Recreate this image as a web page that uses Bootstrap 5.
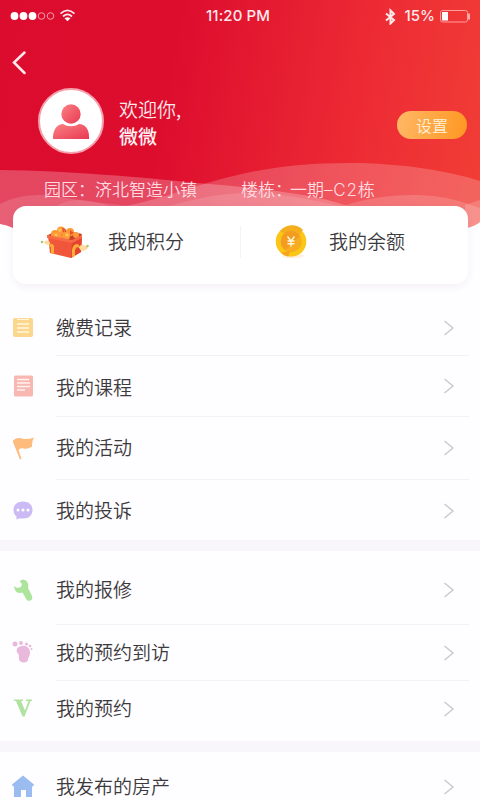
<!DOCTYPE html>
<html lang="zh-CN">
<head>
<meta charset="utf-8">
<meta name="viewport" content="width=device-width, initial-scale=1">
<title>我的</title>
<link href="https://cdn.jsdelivr.net/npm/bootstrap@5.3.0/dist/css/bootstrap.min.css" rel="stylesheet">
<style>
body{font-family:"Noto Sans CJK SC DemiLight","Noto Sans CJK SC",sans-serif;font-weight:350;color:#3c3a3d;background:#fefdff;height:800px;overflow:hidden;font-size:19px;line-height:28px}
svg{display:block;flex:none}
.hero{height:230px;background:linear-gradient(100deg,#dc0c2e 0%,#dd0d2e 35%,#ed2a34 72%,#f13e36 100%)}
.waves{left:0;top:155px}
.status{height:32px;padding:0 9px 0 10px;font:500 15px/32px Inter,sans-serif;color:#ffe9ec}
.clock{left:206px;top:0;letter-spacing:.1px}
.back{padding:19px 0 0 12px;height:56px}
.profile{padding:0 13px 0 38px;height:66px}
.avatar{width:66px;height:66px;background:#fff;border:2px solid #f4a0ad}
.hello{margin-left:15px;line-height:27px;color:#ffe8ea;padding-top:1px}
.hello b{font-family:"Noto Sans CJK SC",sans-serif;font-weight:500;color:#fff0f2}
.setting{width:70px;height:28px;margin-top:8px;background:linear-gradient(100deg,#ffb866,#ff9722);color:#fff1d8;font-size:16px;line-height:27px;padding:0;font-weight:350}
.place{padding:22px 0 0 44px;font-size:17px;line-height:26px;color:#ffdbe0}
.place .zone{width:197px}
.place .unit{margin-left:-2px}
.place .latin{font-family:Inter,sans-serif;font-weight:300;letter-spacing:.8px}
.wallet{margin:-24px 12px 0 13px;height:78px;border:0;border-radius:13px;box-shadow:0 3px 10px rgba(80,50,100,.06);background:#fff}
.wallet .half{height:71px}
.points{width:227px;padding-left:27px}
.points span{margin-left:18px}
.balance{padding-left:34px}
.balance span{margin-left:22px}
.half span,.item .label{position:relative;top:-1px}
.vline{width:1px;height:32px;background:#f6f3f7}
.item{padding:0 25px 0 12px}
.item .ico{width:22px;margin-right:22px}
.item .label{flex:1}
.rule{height:1px;margin:0 11px 0 56px;background:#f3f1f4}
.band{height:11px;background:#f8f6fa}
.h55{height:55px}.h60{height:60px}.h62{height:62px}
</style>
<script src="https://cdn.jsdelivr.net/npm/bootstrap@5.3.0/dist/js/bootstrap.bundle.min.js"></script>
</head>
<body>
<svg width="0" height="0" class="position-absolute"><defs>
<symbol id="chev" viewBox="0 0 12 18"><path d="M1.500 2 10 9l-8.500 7" fill="none" stroke="#cbc8cc" stroke-width="1.400"/></symbol>
<linearGradient id="person" x2="1" y2="1"><stop offset="0" stop-color="#fa8384"/><stop offset="1" stop-color="#e93852"/></linearGradient>
</defs></svg>
<header class="hero position-relative">
<svg class="waves position-absolute" width="480" height="75" viewBox="0 0 480 75">
<path d="M0 15C70 16 140 22 197 28 260 33 320 40 350 52V75H0Z" fill="#fff" fill-opacity=".24"/>
<path d="M120 52C190 40 230 8 350 8 400 8 450 16 480 26V75H120Z" fill="#fff" fill-opacity=".2"/>
<path d="M0 49Q25 36 60 42T130 51V75H0Z" fill="#fff" fill-opacity=".14"/>
<path d="M55 52Q75 38 112 52V75H55Z" fill="#fff" fill-opacity=".1"/>
<path d="M165 52C195 44 220 37 255 38S320 47 345 52V75H165Z" fill="#fff" fill-opacity=".12"/>
<path d="M340 52C380 38 430 36 465 48L480 53V75H340Z" fill="#fff" fill-opacity=".16"/>
<path d="M465 50 480 45V75H465Z" fill="#fff" fill-opacity=".16"/>
<path d="M0 69Q7 70 13 73H467Q475 71 480 67V75H0Z" fill="#fefdff"/>
</svg>
<div class="position-relative">
<div class="status d-flex justify-content-between align-items-center">
<svg width="66" height="18" viewBox="0 0 66 18"><g fill="#fff"><circle cx="4.500" cy="9" r="3.900"/><circle cx="13.500" cy="9" r="3.900"/><circle cx="22.500" cy="9" r="3.900"/></g><g fill="none" stroke="#ff9cab"><circle cx="31.500" cy="9" r="3.300"/><circle cx="40.500" cy="9" r="3.300"/></g><g fill="none" stroke="#ffe6ea" stroke-width="1.700"><path d="M50.500 6.700Q57.500 0 64.500 6.700M53 9.500Q57.500 5.400 62 9.500"/></g><path d="m54.500 11.300 3 3 3-3q-3-2.300-6 0Z" fill="#fff"/></svg>
<span class="clock position-absolute">11:20 PM</span>
<div class="d-flex align-items-center"><svg width="13" height="18" viewBox="0 0 13 18"><path d="m2 6.500 8 6.500-3.500 3.500v-13L10 7l-8 6.500" fill="none" stroke="#ffeaec" stroke-width="2"/></svg><span class="ms-1 me-1 ps-1">15%</span><svg width="32" height="14" viewBox="0 0 32 14"><rect x="1.500" y="1.500" width="27" height="11.500" rx="2" fill="none" stroke="#ff9c9c"/><path d="M3 3h6v8.500H3z" fill="#fff"/><path d="M30 4.500v6" stroke="#ffd1d1" stroke-width="1.500"/></svg></div>
</div>
<div class="back"><svg width="14" height="24" viewBox="0 0 14 24"><path d="M12.500 1.500 2 11.500l10.500 10.500" fill="none" stroke="#ffe7ec" stroke-width="2.500" stroke-linecap="round"/></svg></div>
<div class="profile d-flex align-items-center">
<div class="avatar rounded-circle d-flex align-items-center justify-content-center flex-shrink-0"><svg width="38" height="36" viewBox="0 0 38 36"><g fill="url(#person)"><circle cx="19" cy="11" r="9.700"/><path d="M1 36V33c1-8 5-12 10-12 5 3 11 3 16 0 6 0 10 5 10 12v3Z"/></g></svg></div>
<div class="hello flex-grow-1">欢迎你,<br><b>微微</b></div>
<button class="setting btn rounded-pill border-0">设置</button>
</div>
<div class="place d-flex"><span class="zone">园区：济北智造小镇</span><span>楼栋：<span class="unit">一期<span class="latin">–C2</span>栋</span></span></div>
</div>
</header>
<section class="wallet card position-relative">
<div class="d-flex align-items-center">
<div class="half points d-flex align-items-center">
<svg width="50" height="34" viewBox="0 0 50 34"><path d="m8 10 12-6 22 5-3 7-26 1Z" fill="#c9402b"/><g fill="#ff9a3a"><circle cx="15" cy="9" r="4"/><circle cx="21" cy="5.500" r="4"/><circle cx="30" cy="7" r="4"/><circle cx="26" cy="11" r="4"/><circle cx="18" cy="12" r="4"/><circle cx="36" cy="10" r="3"/></g><g fill="#ffc452"><circle cx="20" cy="5" r="1.800"/><circle cx="27" cy="10" r="1.800"/><circle cx="16" cy="10" r="1.500"/></g><path d="m22 3 4 1-3 4M30 5l4 3-4 2" fill="#e9532d"/><path d="m8 11 24 5 10-5-1 16-10 6-21-5Z" fill="#f0563a"/><path d="m32 16 10-5-1 16-10 6Z" fill="#e5432f"/><path d="m7 10 25 5 10-5v3l-10 5-25-5Z" fill="#f76a45"/><path d="M10 19q3-1 4 2v8l-3-1v-6l-2-1ZM32 25q1-6 5-6 2 0 3 4l-3-1-2 3v6l-3 1Z" fill="#ffae35"/><path d="M10 17q-4-3-6 0 2 4 6 2" fill="#ffd796"/><path d="M39 22q3-4 6-1 4-2 3 2-2 3-5 3t-4-4Z" fill="#ffdc9c"/><circle cx="2" cy="17" r="1.300" fill="#a5c96f"/><circle cx="47.500" cy="21" r="1.300" fill="#b2c97b"/></svg>
<span>我的积分</span></div>
<div class="vline"></div>
<div class="half balance d-flex align-items-center"><svg width="32" height="36" viewBox="0 0 32 36"><ellipse cx="18" cy="32" rx="11" ry="2.500" fill="#fff0e2"/><circle cx="16" cy="17.500" r="15.300" fill="#fac719"/><path d="M5 7a15.300 15.300 0 0 1 23-1L20 17Z" fill="#f5ae1e"/><path d="M6 29a15.300 15.300 0 0 0 7 3.500l3-6Z" fill="#f7a51b"/><circle cx="16" cy="17.500" r="10.500" fill="#f49c20"/><path d="M25 12a10.500 10.500 0 0 1-15 14Z" fill="#f8ad20"/><path d="m12.500 12.500 3.500 4.500 3.500-4.500M16 17v5.500m-3.500-5.500h7m-7 2.800h7" fill="none" stroke="#fff6d8" stroke-width="1.500"/></svg><span>我的余额</span></div>
</div>
</section>
<main class="pt-3">
<div class="item h55 d-flex align-items-center"><svg class="ico" width="22" height="22" viewBox="0 0 22 22"><path d="M3 1h16q2 0 2 2v15q0 2-2 2H3q-2 0-2-2V3q0-2 2-2Z" fill="#fbd68d"/><path d="M6 0v2.500h10V0" fill="none" stroke="#fff5dd" stroke-width="1.200"/><path d="M5 7h12M5 11h12M5 15h12" stroke="#fff7df" stroke-width="1.600"/></svg><span class="label">缴费记录</span><svg width="12" height="18"><use href="#chev"/></svg></div>
<div class="rule"></div>
<div class="item h60 d-flex align-items-center"><svg class="ico" width="22" height="22" viewBox="0 0 22 22"><rect x="2" y=".5" width="19" height="21" rx="1.500" fill="#f9b7b2"/><path d="M5 4.500h12M5 8h13M5 11.500h13M5 15h8" stroke="#fff2ef" stroke-width="1.400"/></svg><span class="label pt-1">我的课程</span><svg width="12" height="18"><use href="#chev"/></svg></div>
<div class="rule"></div>
<div class="item h62 d-flex align-items-center" style="padding-bottom:1px"><svg class="ico" width="22" height="24" viewBox="0 0 22 24"><path d="M1 4.500Q5 1 10 2.500T22 1.500q-2 3-2 9-4 3-8 2T6.500 14L9.500 23 8 23.500 1 6Z" fill="#fdbb7c"/></svg><span class="label">我的活动</span><svg width="12" height="18"><use href="#chev"/></svg></div>
<div class="rule"></div>
<div class="item h62 d-flex align-items-center" style="padding-bottom:1px"><svg class="ico" width="22" height="22" viewBox="0 0 22 22"><path d="M11 1.500c6 0 9.500 3.500 9.500 8.500S17 18.500 11 18.500q-2 0-4 0L4.500 19.500V16.500Q1.500 14 1.500 10C1.500 5 5 1.500 11 1.500Z" fill="#ccbaf5"/><g fill="#fff"><circle cx="6" cy="10" r="1.500"/><circle cx="11" cy="10" r="1.500"/><circle cx="16" cy="10" r="1.500"/></g></svg><span class="label">我的投诉</span><svg width="12" height="18"><use href="#chev"/></svg></div>
<div class="band" style="margin-top:-2px"></div>
<div class="item d-flex align-items-center" style="height:73px;padding-top:5px"><svg class="ico" width="22" height="26" viewBox="0 0 22 26"><path d="M8 5 9 3q3-1.500 5.500 1t1.500 7l4 8q1 3-1.500 4.500-3 1-4-1l-4-7Q5 17 3 13L2 9l3 2 4-1 1-3Z" fill="#ace49b"/></svg><span class="label">我的报修</span><svg width="12" height="18"><use href="#chev"/></svg></div>
<div class="rule"></div>
<div class="item h55 d-flex align-items-center"><svg class="ico" width="22" height="24" viewBox="0 0 22 24"><g fill="#e8b9da"><circle cx="3" cy="3" r="2.500"/><circle cx="9" cy="2" r="1.900"/><circle cx="14.500" cy="3" r="1.500"/><circle cx="18" cy="5" r="1.300"/><circle cx="19.500" cy="8" r="1"/><path d="M8 5.500c5-2 10 1 10 6 0 4-2 5-2 7 0 4-8 4-9 0-.5-3 .5-4-1-6C4 10.500 4 6.500 8 5.500Z"/></g></svg><span class="label">我的预约到访</span><svg width="12" height="18"><use href="#chev"/></svg></div>
<div class="rule"></div>
<div class="item h60 d-flex align-items-center" style="padding-bottom:4px"><svg class="ico" width="22" height="22" viewBox="0 0 22 22"><path d="M2 1.500h9V3H9L13 12.500 16.500 3H14V1.500h6V3h-1.500L12.500 18.500h-2L4 3H2Z" fill="#b0e2a0"/></svg><span class="label">我的预约</span><svg width="12" height="18"><use href="#chev"/></svg></div>
<div class="band"></div>
<div class="item d-flex align-items-center" style="height:70px"><svg class="ico" width="22" height="24" viewBox="0 0 22 24"><path d="m11 .5 11 9-1 2h-1V22h-6v-7H9v7H2V11.500H1l-1-2Z" fill="#9bbcf0"/></svg><span class="label">我发布的房产</span><svg width="12" height="18"><use href="#chev"/></svg></div>
</main>
</body>
</html>
